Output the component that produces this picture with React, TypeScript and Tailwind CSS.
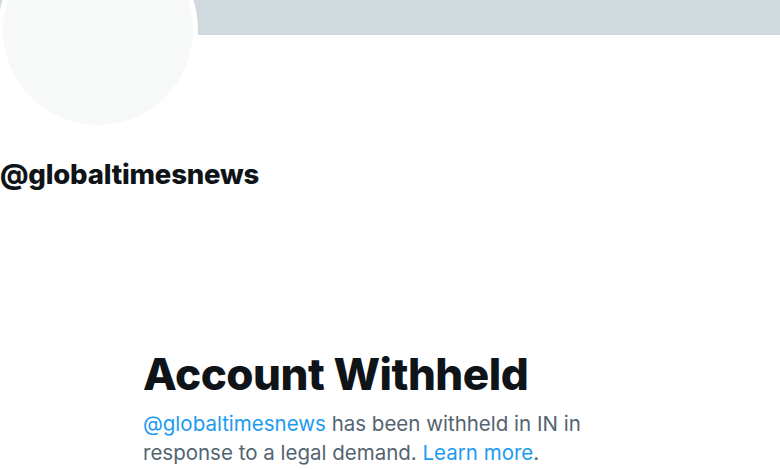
import React from "react";

export default function App() {
  return (
    <div className="relative w-[780px] h-[470px] overflow-hidden bg-white font-['Inter',sans-serif]">
      <div className="h-[35px] bg-[#cfd9de]" />
      {/* avatar overlaps the banner */}
      <div className="absolute left-[-2px] top-[-70px] w-[200px] h-[200px] rounded-full border-[5px] border-white bg-[#f7f9f9]" />
      <div className="pt-[123px]">
        <h2 className="text-[27.5px] leading-[32px] font-extrabold text-[#0f1419] tracking-[-0.2px]">@globaltimesnews</h2>
      </div>
      <div className="mt-[160px] ml-[143px] w-[470px]">
        <h1 className="text-[44px] leading-[48px] font-extrabold text-[#0f1419] tracking-[-0.5px]">Account Withheld</h1>
        <p className="mt-[11px] text-[20.5px] leading-[29px] text-[#536471]">
          <span className="text-[#1d9bf0]">@globaltimesnews</span> has been withheld in IN in{" "}
          <br />
          response to a legal demand. <span className="text-[#1d9bf0]">Learn more</span>.
        </p>
      </div>
    </div>
  );
}
